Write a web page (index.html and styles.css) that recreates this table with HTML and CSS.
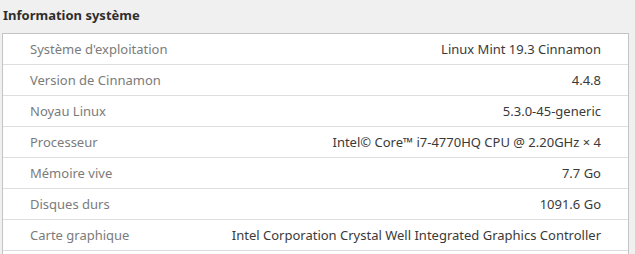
FILE: index.html
```html
<!DOCTYPE html>
<html lang="fr">
<head>
    <meta charset="UTF-8">
    <meta name="viewport" content="width=device-width, initial-scale=1.0">
    <title>Information système</title>
    <link rel="stylesheet" href="styles.css">
</head>
<body>
    <div class="page">
        <h1 class="section-title">Information système</h1>
        <div class="info-box">
            <div class="info-row">
                <span class="label">Système d'exploitation</span>
                <span class="value">Linux Mint 19.3 Cinnamon</span>
            </div>
            <div class="info-row">
                <span class="label">Version de Cinnamon</span>
                <span class="value">4.4.8</span>
            </div>
            <div class="info-row">
                <span class="label">Noyau Linux</span>
                <span class="value">5.3.0-45-generic</span>
            </div>
            <div class="info-row">
                <span class="label">Processeur</span>
                <span class="value">Intel© Core™ i7-4770HQ CPU @ 2.20GHz × 4</span>
            </div>
            <div class="info-row">
                <span class="label">Mémoire vive</span>
                <span class="value">7.7 Go</span>
            </div>
            <div class="info-row">
                <span class="label">Disques durs</span>
                <span class="value">1091.6 Go</span>
            </div>
            <div class="info-row">
                <span class="label">Carte graphique</span>
                <span class="value">Intel Corporation Crystal Well Integrated Graphics Controller</span>
            </div>
        </div>
    </div>
</body>
</html>
```

FILE: styles.css
```css
body {
    font-family: "Noto Sans", "Open Sans", sans-serif;
    font-size: 13px;
    background-color: #f0f0f0;
    margin: 0;
    padding: 0;
    overflow: hidden;
}

.page {
    padding: 5px 6px 0 2px;
}

.section-title {
    margin: 0 0 8px 1px;
    font-size: 13px;
    font-weight: bold;
    color: #2e2e2e;
    line-height: 20px;
}

.info-box {
    background-color: white;
    border: 1px solid #c4c4c4;
    border-bottom: none;
    padding-bottom: 20px;
}

.info-row {
    display: flex;
    justify-content: space-between;
    align-items: center;
    height: 30px;
    padding: 0 27px;
    border-bottom: 1px solid #dedede;
}

.label {
    color: #7b7b7b;
}

.value {
    color: #3a3a3a;
}
```
